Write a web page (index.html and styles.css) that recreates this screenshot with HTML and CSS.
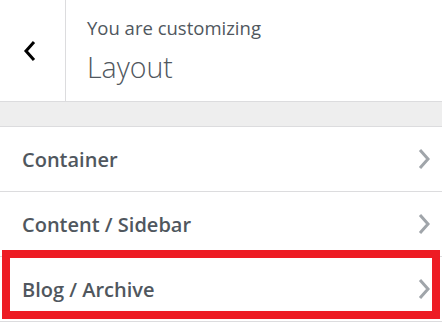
FILE: index.html
```html
<!DOCTYPE html>
<html>
<head>
<meta charset="utf-8">
<link rel="stylesheet" href="styles.css">
</head>
<body>
<div class="panel">
  <div class="header">
    <div class="back">
      <svg width="14" height="22" viewBox="0 0 14 22"><polyline points="11,2 3,11 11,20" fill="none" stroke="#000" stroke-width="3"/></svg>
    </div>
    <div class="titles">
      <div class="sub">You are customizing</div>
      <div class="title">Layout</div>
    </div>
  </div>
  <div class="band"></div>
  <div class="row"><span class="label">Container</span><svg class="chev" width="14" height="22" viewBox="0 0 14 22"><polyline points="3,2 11,11 3,20" fill="none" stroke="#a0a5aa" stroke-width="3"/></svg></div>
  <div class="row"><span class="label">Content / Sidebar</span><svg class="chev" width="14" height="22" viewBox="0 0 14 22"><polyline points="3,2 11,11 3,20" fill="none" stroke="#a0a5aa" stroke-width="3"/></svg></div>
  <div class="row highlight"><span class="label">Blog / Archive</span><svg class="chev" width="14" height="22" viewBox="0 0 14 22"><polyline points="3,2 11,11 3,20" fill="none" stroke="#a0a5aa" stroke-width="3"/></svg><div class="mark"></div></div>
</div>
</body>
</html>
```
FILE: styles.css
```css
html, body { margin: 0; padding: 0; background: #fff; }
body { width: 442px; height: 322px; overflow: hidden; font-family: "Open Sans", "Noto Sans", sans-serif; color: #50575e; }
.header { display: flex; height: 101px; border-bottom: 1px solid #dcdcde; }
.back { border-right: 1px solid #dcdcde; display: flex; align-items: center; justify-content: center; box-sizing: border-box; width: 66px; }
.back svg { margin-right: 6px; }
.titles { padding-left: 21px; display: flex; flex-direction: column; }
.sub { font-size: 18.5px; line-height: 20px; margin-top: 18px; }
.title { font-size: 28.5px; font-weight: 300; line-height: 34px; margin-top: 12px; }
.band { height: 24px; background: #eeeeee; border-bottom: 1px solid #dcdcde; }
.row { position: relative; height: 64px; border-bottom: 1px solid #dcdcde; display: flex; align-items: center; justify-content: space-between; padding: 0 11px 0 22px; }
.label { font-size: 20px; font-weight: 600; }
.mark { position: absolute; left: 2px; top: -7px; width: 438px; height: 69px; border: 8px solid #ed1c24; box-sizing: border-box; }
```
